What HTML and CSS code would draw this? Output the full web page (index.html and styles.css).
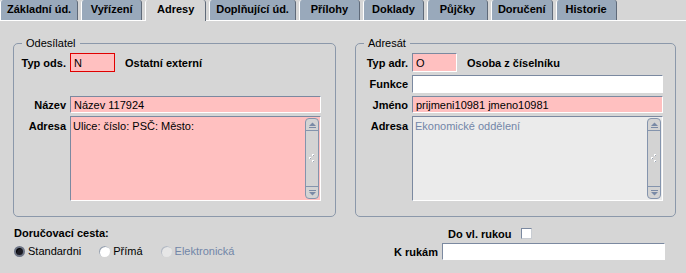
FILE: index.html
```html
<!DOCTYPE html>
<html lang="cs">
<head>
  <meta charset="UTF-8" />
  <title>Adresy</title>
  <link rel="stylesheet" href="styles.css">
</head>
<body>

  <div class="tabs">
    <div class="tab">Základní úd.</div>
    <div class="tab">Vyřízení</div>
    <div class="tab active">Adresy</div>
    <div class="tab">Doplňující úd.</div>
    <div class="tab">Přílohy</div>
    <div class="tab">Doklady</div>
    <div class="tab">Půjčky</div>
    <div class="tab">Doručení</div>
    <div class="tab">Historie</div>
  </div>

  <div class="groups">
    <div class="group group-left">
      <span class="legend">Odesílatel</span>

      <label>Typ ods.</label>
      <div class="typ-row">
        <div class="field short pink error">N</div>
        <b>Ostatní externí</b>
      </div>

      <!-- funkce se u odesilatele nezobrazuje -->
      <label class="hidden">Funkce</label>
      <div class="field hidden"></div>

      <label>Název</label>
      <div class="field pink">Název 117924</div>

      <label class="top">Adresa</label>
      <div class="area pink">
        <div class="area-text">Ulice: číslo: PSČ: Město:</div>
        <div class="scrollbar">
          <div class="sb-btn up">
            <svg width="9" height="6" viewBox="0 0 9 6"><polygon points="1,4 4.5,0.5 8,4" fill="#7a8aa6"/><rect x="1" y="5" width="7" height="1" fill="#7a8aa6"/></svg>
          </div>
          <div class="sb-track">
            <svg width="6" height="9" viewBox="0 0 6 9"><rect x="3" y="0" width="2" height="2" fill="#fff"/><rect x="0" y="3" width="2" height="2" fill="#fff"/><rect x="3" y="6" width="2" height="2" fill="#fff"/><rect x="4" y="1" width="1" height="1" fill="#9aa5b5"/><rect x="1" y="4" width="1" height="1" fill="#9aa5b5"/><rect x="4" y="7" width="1" height="1" fill="#9aa5b5"/></svg>
          </div>
          <div class="sb-btn down">
            <svg width="9" height="6" viewBox="0 0 9 6"><rect x="1" y="0" width="7" height="1" fill="#7a8aa6"/><polygon points="1,2 8,2 4.5,5.5" fill="#7a8aa6"/></svg>
          </div>
        </div>
      </div>
    </div>

    <div class="group group-right">
      <span class="legend">Adresát</span>

      <label>Typ adr.</label>
      <div class="typ-row">
        <div class="field short pink">O</div>
        <b>Osoba z číselníku</b>
      </div>

      <label>Funkce</label>
      <div class="field"></div>

      <label>Jméno</label>
      <div class="field pink">prijmeni10981 jmeno10981</div>

      <label class="top">Adresa</label>
      <div class="area grey">
        <div class="area-text disabled">Ekonomické oddělení</div>
        <div class="scrollbar">
          <div class="sb-btn up">
            <svg width="9" height="6" viewBox="0 0 9 6"><polygon points="1,4 4.5,0.5 8,4" fill="#7a8aa6"/><rect x="1" y="5" width="7" height="1" fill="#7a8aa6"/></svg>
          </div>
          <div class="sb-track">
            <svg width="6" height="9" viewBox="0 0 6 9"><rect x="3" y="0" width="2" height="2" fill="#fff"/><rect x="0" y="3" width="2" height="2" fill="#fff"/><rect x="3" y="6" width="2" height="2" fill="#fff"/><rect x="4" y="1" width="1" height="1" fill="#9aa5b5"/><rect x="1" y="4" width="1" height="1" fill="#9aa5b5"/><rect x="4" y="7" width="1" height="1" fill="#9aa5b5"/></svg>
          </div>
          <div class="sb-btn down">
            <svg width="9" height="6" viewBox="0 0 9 6"><rect x="1" y="0" width="7" height="1" fill="#7a8aa6"/><polygon points="1,2 8,2 4.5,5.5" fill="#7a8aa6"/></svg>
          </div>
        </div>
      </div>
    </div>
  </div>

  <div class="bottom">
    <div class="delivery">
      <div class="caption">Doručovací cesta:</div>
      <div class="radios">
        <span class="radio checked"></span><span class="radio-label">Standardni</span>
        <span class="radio"></span><span class="radio-label">Přímá</span>
        <span class="radio off"></span><span class="radio-label disabled">Elektronická</span>
      </div>
    </div>

    <div class="hands">
      <div class="own-hands">
        <b>Do vl. rukou</b>
        <span class="checkbox"></span>
      </div>
      <label>K rukám</label>
      <div class="field"></div>
    </div>
  </div>

</body>
</html>
```

FILE: styles.css
```css
body {
  margin: 0;
  background: #d6d6d6;
  font-family: "Liberation Sans", Arial, sans-serif;
  font-size: 11px;
  color: #000;
}

/* zalozky */
.tabs {
  display: flex;
  align-items: flex-start;
  gap: 3px;
  height: 20px;
  border-bottom: 1px solid #fff;
}

.tab {
  box-sizing: border-box;
  height: 20px;
  min-width: 61px;
  padding: 0 6px;
  line-height: 19px;
  text-align: center;
  font-weight: bold;
  background: #99a9bb;
  border-left: 1px solid #fff;
  border-right: 1px solid #5f6a79;
  border-radius: 3px 3px 0 0;
}

.tab.active {
  height: 21px;
  background: #d6d6d6;
}

/* skupiny */
.groups {
  display: flex;
  margin-top: 22px;
  padding-left: 13px;
}

.group {
  position: relative;
  display: grid;
  grid-template-columns: 52px 251px;
  grid-template-rows: 19px 18px 17px 85px;
  column-gap: 4px;
  row-gap: 3px;
  padding: 9px 14px 15px 0;
  border: 1px solid #8b98aa;
  border-radius: 5px;
}

.group-right {
  margin-left: 19px;
  padding-right: 12px;
}

.legend {
  position: absolute;
  top: -7px;
  left: 8px;
  padding: 0 4px;
  line-height: 13px;
  background: #d6d6d6;
}

label {
  font-weight: bold;
  text-align: right;
  align-self: center;
  white-space: nowrap;
}

label.top {
  align-self: start;
  padding-top: 4px;
}

.hidden {
  visibility: hidden;
}

.typ-row {
  display: flex;
  align-items: center;
  gap: 10px;
}

.typ-row b {
  padding-top: 1px;
}

.field {
  box-sizing: border-box;
  height: 100%;
  padding: 0 3px;
  background: #fff;
  border-top: 1px solid #7b89a0;
  border-left: 1px solid #7b89a0;
  border-right: 1px solid #fff;
  border-bottom: 1px solid #fff;
  display: flex;
  align-items: center;
  white-space: nowrap;
}

.field.short {
  width: 45px;
}

.pink {
  background: #ffc0c0;
}

.field.error {
  border: 1px solid #e00000;
}

.area {
  display: flex;
  border-top: 1px solid #7b89a0;
  border-left: 1px solid #7b89a0;
  border-right: 1px solid #fff;
  border-bottom: 1px solid #fff;
}

.area.grey {
  background: #ebebeb;
}

.area-text {
  flex: 1;
  padding: 3px 2px;
  line-height: 13px;
}

.disabled {
  color: #7286a8;
}

/* posuvnik */
.scrollbar {
  display: flex;
  flex-direction: column;
  width: 12px;
  margin: 1px 1px 1px 0;
  background: #d3d3d3;
  border: 1px solid #8494ad;
  border-radius: 4px;
}

.sb-btn {
  height: 11px;
  display: flex;
  align-items: center;
  justify-content: center;
}

.sb-btn.up {
  border-bottom: 1px solid #8494ad;
}

.sb-btn.down {
  border-top: 1px solid #8494ad;
}

.sb-track {
  flex: 1;
  display: flex;
  align-items: center;
  justify-content: center;
}

/* spodni cast */
.bottom {
  display: flex;
  padding-left: 14px;
  margin-top: 10px;
}

.delivery {
  width: 376px;
}

.caption {
  font-weight: bold;
  line-height: 13px;
}

.radios {
  display: flex;
  align-items: center;
  margin-top: 5px;
  line-height: 13px;
}

.radio {
  box-sizing: border-box;
  width: 11px;
  height: 11px;
  border-radius: 50%;
  background: #fff;
  box-shadow: inset 1px 1px 0 #9aa3b0;
  margin-right: 3px;
}

.radio.checked {
  background: #1c1c24;
  border: 2px solid #6c7384;
  box-shadow: inset 1px 1px 0 #000;
}

.radio.off {
  background: #e6e6e6;
  box-shadow: inset 1px 1px 0 #b4bac4;
}

.radio-label {
  margin-right: 18px;
}

.hands {
  display: grid;
  grid-template-columns: 48px 223px;
  grid-template-rows: 13px 17px;
  column-gap: 4px;
  row-gap: 3px;
}

.own-hands {
  grid-column: 2;
  display: flex;
  align-items: center;
  gap: 9px;
  padding-left: 6px;
}

.checkbox {
  box-sizing: border-box;
  width: 11px;
  height: 11px;
  background: #fff;
  border-top: 1px solid #7b89a0;
  border-left: 1px solid #7b89a0;
  border-right: 1px solid #c8ccd2;
  border-bottom: 1px solid #c8ccd2;
}
```
